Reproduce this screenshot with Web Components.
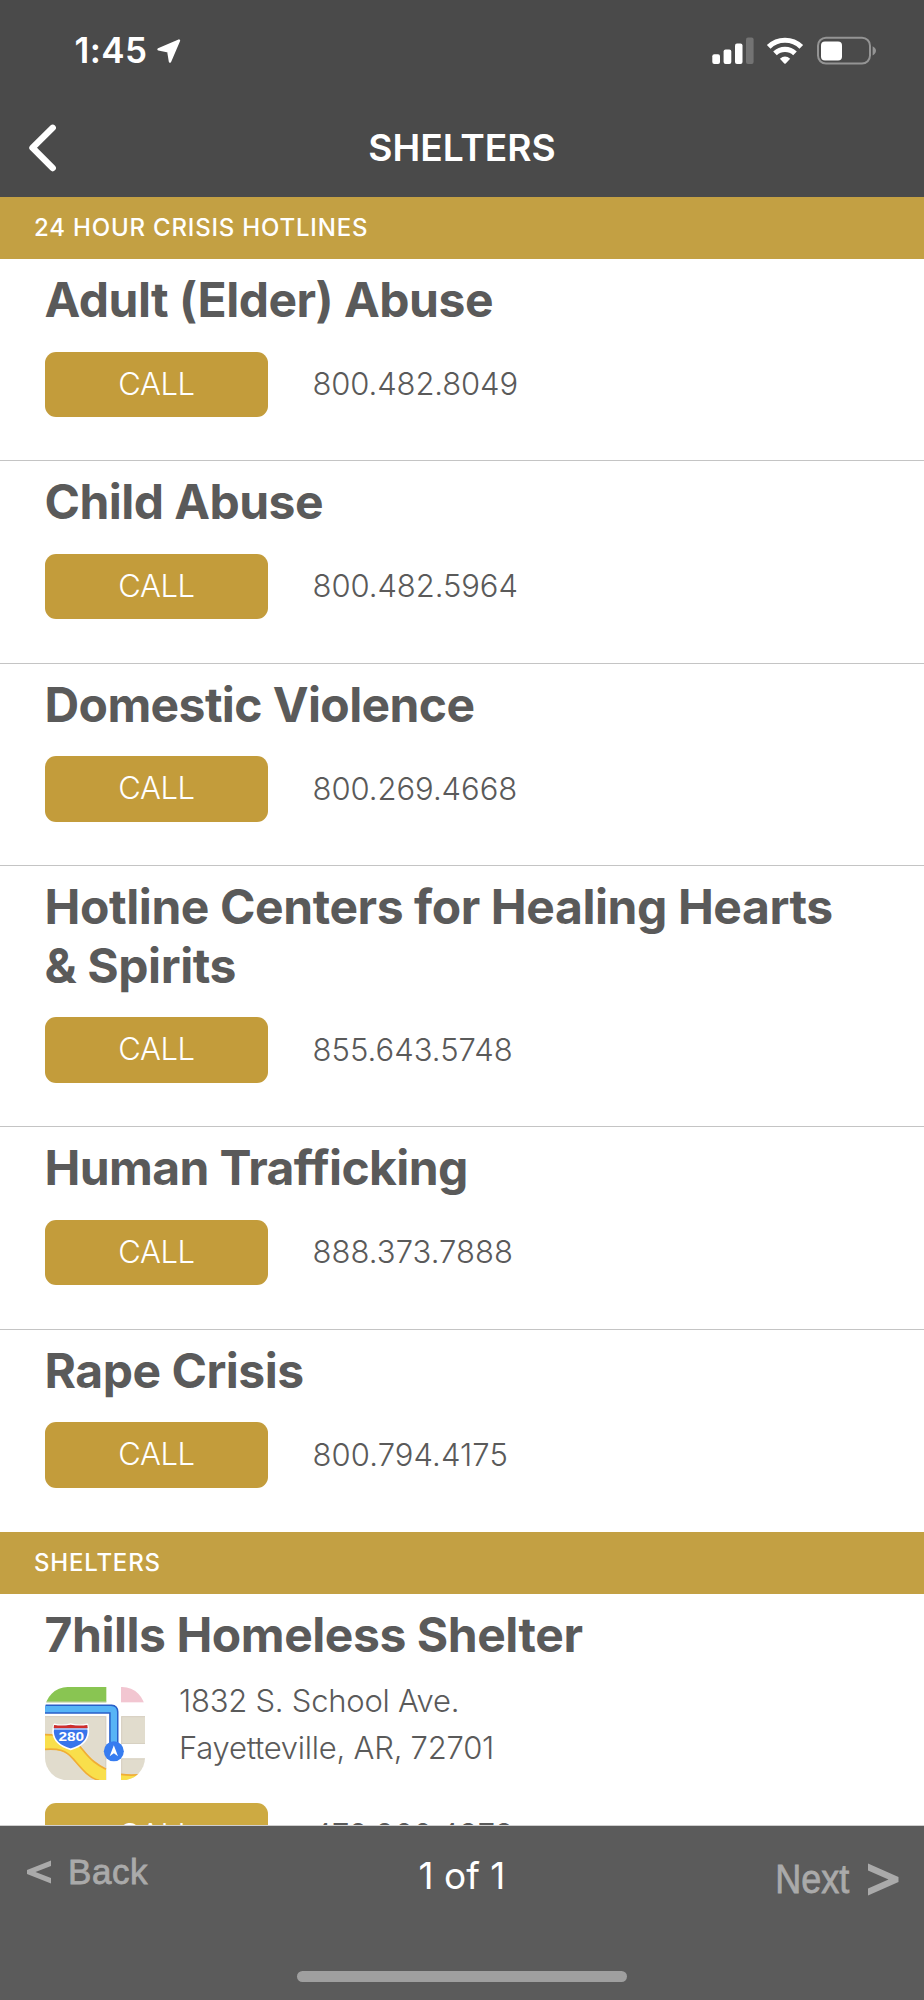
<!DOCTYPE html>
<html lang="en">
<head>
<meta charset="utf-8">
<title>Shelters</title>
<style>
body{margin:0;background:#fff;font-family:Inter,"Liberation Sans",sans-serif}
</style>
</head>
<body>
<script>
const define = (name, html) => {
  const template = document.createElement('template');
  template.innerHTML = html;
  customElements.define(name, class extends HTMLElement {
    connectedCallback() {
      if (this.shadowRoot) return;
      this.attachShadow({ mode: 'open' }).append(template.content.cloneNode(true));
    }
  });
};

define('status-bar', `
<style>
:host{display:flex;align-items:center;justify-content:space-between;height:101px;padding:0 38px 0 74.5px;box-sizing:border-box;color:#fff}
.left{display:flex;align-items:center}
.time{font-size:35px;font-weight:600;line-height:101px;letter-spacing:.4px}
svg{display:block}
.arrow{margin-left:9px}
</style>
<div class="left"><span class="time">1:45</span>
<svg class="arrow" width="26" height="26" viewBox="156 37.5 26 26"><path d="M179 40 158.500 48.800 168.300 50.800 170 61Z" fill="#fff" stroke="#fff" stroke-width="2.400" stroke-linejoin="round"/></svg></div>
<svg width="180" height="40" viewBox="706 30.5 180 40">
<g fill="#fff"><rect x="712.3" y="53.700" width="7.700" height="9.800" rx="2"/><rect x="723.600" y="49" width="7.700" height="14.500" rx="2"/><rect x="735" y="43" width="7.500" height="20.500" rx="2"/><rect x="746" y="37" width="7.600" height="26.500" rx="2" fill="#737373"/></g>
<g fill="none" stroke="#fff" stroke-width="5.200"><path d="M768.700 46.300A23.500 23.500 0 0 1 801.300 46.300"/><path d="M775 52.800A14.500 14.500 0 0 1 795 52.800"/></g>
<path d="M779.900 58.300Q785 53.700 790.200 58.300L785.700 63Q785 63.500 784.300 63Z" fill="#fff"/>
<rect x="818" y="37.200" width="52" height="25.900" rx="8" fill="none" stroke="#949494" stroke-width="2"/>
<rect x="821" y="41" width="21" height="19" rx="4" fill="#fff"/>
<path d="M872.600 45.700Q876 47.500 876 50.300T872.600 55Z" fill="#949494"/>
</svg>`);

define('nav-bar', `
<style>
:host{display:grid;grid-template-columns:1fr auto 1fr;height:96px;color:#fff}
svg{display:block;margin:20px 0 0 24px}
h1{margin:0;font-size:37.200px;font-weight:600;line-height:94px}
</style>
<svg width="38" height="54" viewBox="24 121 38 54"><path d="M52.700 127.800 32.500 147.800 52.700 168" fill="none" stroke="#fff" stroke-width="6.400" stroke-linecap="round" stroke-linejoin="round"/></svg>
<h1><slot></slot></h1>`);

define('section-bar', `
<style>
:host{display:block;height:62px;line-height:61px;padding-left:34px;background:#c3a043;color:#fff;font-size:24px;font-weight:500;letter-spacing:.81px}
</style><slot></slot>`);

define('call-row', `
<style>
:host{display:flex;align-items:center;height:65.500px;font-size:31px;font-weight:300;line-height:65px}
.btn{width:223px;height:65.500px;line-height:64px;margin-right:44.500px;border-radius:11px;background:var(--call-color,#c39c3b);color:#fff;text-align:center;letter-spacing:-.4px}
.num{color:#5a5a5a;white-space:nowrap;margin-top:-1.500px;letter-spacing:var(--num-track,.03px)}
</style>
<div class="btn">CALL</div><span class="num"><slot></slot></span>`);

define('contact-item', `
<style>
:host{display:block;box-sizing:border-box;padding:12px 45px 43.450px 45px;border-bottom:1px solid #c4c4c4}
:host([last]){border-bottom-color:transparent}
h2{margin:0 30px 22px -.5px;font-size:48px;font-weight:700;line-height:58.500px;color:#5a5a5a;letter-spacing:var(--track,-.5px)}
</style>
<h2><slot name="title"></slot></h2><slot></slot>`);

define('map-address', `
<style>
:host{display:flex;margin-bottom:23px;color:#5a5a5a;font-size:31px;font-weight:300;line-height:46.700px;letter-spacing:-.24px}
svg{display:block;width:100px;height:93.330px;margin-right:34px;flex:none}
.text{margin-top:-8.500px}
</style>
<svg viewBox="45 50 300 280">
<defs><clipPath id="r"><rect x="45" y="50" width="300" height="280" rx="68"/></clipPath></defs>
<g clip-path="url(#r)">
<rect x="45" y="50" width="300" height="280" fill="#fff"/>
<rect x="45" y="50" width="184" height="46" fill="#89c552"/>
<rect x="273" y="50" width="72" height="46" fill="#f2c6d1"/>
<rect x="45" y="137" width="184" height="193" fill="#e1dccd"/>
<rect x="273" y="137" width="72" height="84" fill="#e1dccd"/>
<rect x="273" y="264" width="72" height="66" fill="#e1dccd"/>
<path d="M45 139H227V330M345 139H275V221M45 94.500H229M274 219.500H345M345 265.500H275V330" fill="none" stroke="#d1ccbc" stroke-width="2"/>
<path d="M45 191C100 192 136 209 158 236C184 269 200 281 228 295V330H207C174 323 151 292 129 267C108 242 86 236 45 239Z" fill="#f9df4b"/>
<path d="M45 193C100 194 136 211 158 238C184 271 200 282 228 297M45 237C86 234 108 240 129 265C151 290 174 322 207 330" fill="none" stroke="#f0ad36" stroke-width="5"/>
<path d="M273 312Q306 317 345 311V330H273Z" fill="#f9df4b"/><path d="M273 312Q306 317 345 311" fill="none" stroke="#f0ad36" stroke-width="5"/>
<path d="M40 116.500H245Q251.500 116.500 251.500 124V228" fill="none" stroke="#285fc8" stroke-width="28"/>
<path d="M40 116.500H243Q251.500 116.500 251.500 125V228" fill="none" stroke="#57b4f6" stroke-width="19"/>
</g>
<circle cx="251.500" cy="243" r="30" fill="#367cf0"/>
<path d="M251.500 225 264 258 251.500 249 239 258Z" fill="#fff"/>
<path d="M73 162Q96 168 122 161Q148 168 172 162Q175 170 175 185Q172 223 122 237Q72 223 69 185Q69 170 73 162Z" fill="#3875eb" stroke="#fff" stroke-width="5" stroke-linejoin="round"/>
<path d="M72 164Q98 168 122 163Q147 168 172 164L173 174H71Z" fill="#cf2e2b"/>
<path d="M70 176H174" stroke="#fff" stroke-width="3"/>
<text x="124" y="213" text-anchor="middle" textLength="77" lengthAdjust="spacingAndGlyphs" font-family="Liberation Sans" font-weight="700" font-size="41" letter-spacing="0" fill="#fff">280</text>
</svg>
<div class="text"><slot></slot></div>`);

define('pager-bar', `
<style>
:host{display:block;position:relative;height:174px;background:#5b5b5b;color:#fff}
.row{display:grid;grid-template-columns:1fr auto 1fr;align-items:start;padding:0 26px}
.side{display:flex;align-items:start;color:#aaa;font-family:"Liberation Sans",Arial,sans-serif;line-height:40px;-webkit-text-stroke:.8px #aaa}
.back{margin-top:25.500px;font-size:35px;letter-spacing:.6px}
.next{margin-top:33px;font-size:40px;justify-content:flex-end}
.next span{transform:scaleX(.9);transform-origin:right}
.back svg{margin:8.500px 17px 0 0}
.next svg{margin:4px -1px 0 19px}
.count{margin-top:29.500px;font-size:37px;line-height:40px}
.home{width:330px;height:11px;border-radius:6px;background:#9f9f9f;position:absolute;left:297px;top:145px}
svg{display:block}
</style>
<div class="row">
<div class="side back"><svg width="25" height="24" viewBox="0 0 25 24"><path d="M25 .5V6L9.500 12 25 18V23.500L1 14V10Z" fill="#aaa"/></svg><span>Back</span></div>
<div class="count">1 of 1</div>
<div class="side next"><span>Next</span><svg width="31" height="34" viewBox="0 0 31 34"><path d="M0 .5V7.500L20.500 16.500 0 25.500V32.500L30.500 19V14Z" fill="#aaa"/></svg></div>
</div>
<div class="home"></div>`);

define('phone-screen', `
<style>
:host{display:flex;flex-direction:column;height:2000px;width:924px;overflow:hidden;background:#fff}
header{background:#4a4a4a;flex:none}
main{height:1628px;flex:none;overflow:hidden;border-bottom:1px solid #cfcfcf}
pager-bar{flex:none}
</style>
<header><status-bar></status-bar><nav-bar>SHELTERS</nav-bar></header>
<main><slot></slot></main>
<pager-bar></pager-bar>`);
</script>

<phone-screen>
<section-bar>24 HOUR CRISIS HOTLINES</section-bar>
<contact-item style="--num-track:-.13px"><span slot="title">Adult (Elder) Abuse</span><call-row>800.482.8049</call-row></contact-item>
<contact-item style="--track:-.55px;--num-track:-.07px"><span slot="title">Child Abuse</span><call-row>800.482.5964</call-row></contact-item>
<contact-item style="--track:-.6px;--num-track:-.05px"><span slot="title">Domestic Violence</span><call-row>800.269.4668</call-row></contact-item>
<contact-item style="--track:-.42px"><span slot="title">Hotline Centers for Healing Hearts &amp; Spirits</span><call-row>855.643.5748</call-row></contact-item>
<contact-item style="--track:-.62px;--num-track:.06px"><span slot="title">Human Trafficking</span><call-row>888.373.7888</call-row></contact-item>
<contact-item last style="--num-track:.1px"><span slot="title">Rape Crisis</span><call-row>800.794.4175</call-row></contact-item>
<section-bar>SHELTERS</section-bar>
<contact-item last style="--track:-.45px"><span slot="title">7hills Homeless Shelter</span>
<map-address>1832 S. School Ave.<br>Fayetteville, AR, 72701</map-address>
<call-row style="--call-color:#cdaa42">479.966.4378</call-row></contact-item>
</phone-screen>
</body>
</html>
